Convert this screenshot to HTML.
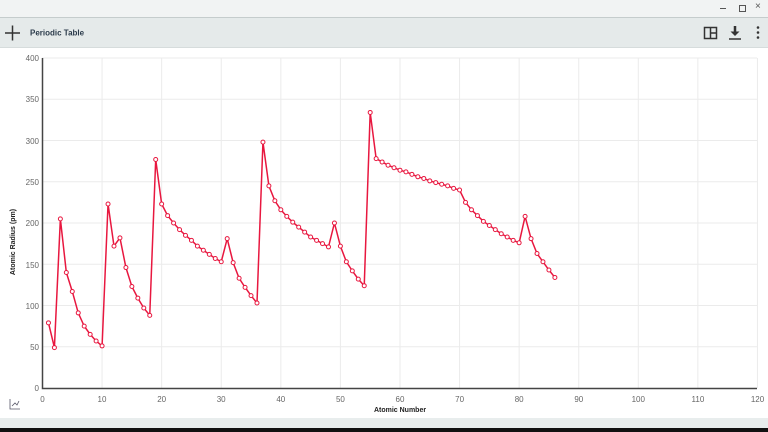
<!DOCTYPE html>
<html><head><meta charset="utf-8"><style>
body{margin:0;width:768px;height:432px;overflow:hidden;background:#fff;font-family:"Liberation Sans",sans-serif;position:relative}
#tb{position:absolute;left:0;top:0;width:768px;height:17px;background:#f1f3f3;border-bottom:1px solid #c5cccc}
#tool{position:absolute;left:0;top:18px;width:768px;height:29px;background:#e5eaea;border-bottom:1px solid #d6dcdc}
#bot{position:absolute;left:0;top:418px;width:768px;height:10px;background:#e8eded}
#blk{position:absolute;left:0;top:428px;width:768px;height:4px;background:#111}
</style></head><body>
<div id="tb">
<div style="position:absolute;left:720px;top:8px;width:6px;height:1px;background:#555"></div>
<div style="position:absolute;left:739px;top:5px;width:5px;height:5px;border:1px solid #555"></div>
<div style="position:absolute;left:755px;top:1px;font-size:10px;color:#555">×</div>
</div>
<div id="tool">
<svg width="768" height="29" style="position:absolute;left:0;top:0">
<path d="M5 15H20M12.5 7.5V22.5" stroke="#333" stroke-width="1.5"/>
<text x="30" y="17.5" font-size="8" font-weight="bold" fill="#2a3a4a" font-family="Liberation Sans">Periodic Table</text>
<rect x="704.5" y="9.5" width="12" height="11" fill="none" stroke="#333" stroke-width="1.5"/>
<path d="M710.5 9.5V20.5M710.5 15H716.5" stroke="#333" stroke-width="1.5"/>
<path d="M735 8V15" stroke="#333" stroke-width="2.5"/><path d="M730.5 13.5L735 18L739.5 13.5Z" fill="#333"/><path d="M729 21H741" stroke="#333" stroke-width="1.5"/>
<circle cx="758" cy="9.5" r="1.3" fill="#333"/><circle cx="758" cy="14.5" r="1.3" fill="#333"/><circle cx="758" cy="19.5" r="1.3" fill="#333"/>
</svg></div>
<svg id="ch" width="768" height="370" style="position:absolute;left:0;top:48px" font-family="Liberation Sans">
<g id="grid" stroke="#ebebeb" stroke-width="1"></g>
<g font-size="8" fill="#666" text-anchor="end">
<text x="39" y="13">400</text><text x="39" y="54">350</text><text x="39" y="96">300</text><text x="39" y="137">250</text><text x="39" y="178">200</text><text x="39" y="220">150</text><text x="39" y="261">100</text><text x="39" y="302">50</text><text x="39" y="343">0</text>
</g>
<g font-size="8" fill="#666" text-anchor="middle">
<text x="42.5" y="354">0</text><text x="102" y="354">10</text><text x="161.7" y="354">20</text><text x="221.2" y="354">30</text><text x="280.8" y="354">40</text><text x="340.4" y="354">50</text><text x="400" y="354">60</text><text x="459.6" y="354">70</text><text x="519.2" y="354">80</text><text x="578.8" y="354">90</text><text x="638.3" y="354">100</text><text x="697.9" y="354">110</text><text x="757.5" y="354">120</text>
</g>
<text x="400" y="364" font-size="7" font-weight="bold" fill="#222" text-anchor="middle">Atomic Number</text>
<text transform="translate(15,194) rotate(-90)" font-size="7" font-weight="bold" fill="#222" text-anchor="middle">Atomic Radius (pm)</text>
<path d="M42.5 10V340.5H757" fill="none" stroke="#444" stroke-width="1.5"/>
<path d="M10 351V361H20M12 358L15 355L17 357L19 353" fill="none" stroke="#556" stroke-width="0.8"/>
<g id="data"></g>
</svg>
<div id="bot"><div style="position:absolute;left:34px;top:10px;width:18px;height:2px;background:#ccc"></div><div style="position:absolute;left:64px;top:10px;width:18px;height:2px;background:#777"></div></div>
<div id="blk"></div>
<script>
var v=[79,49,205,140,117,91,75,65,57,51,223,172,182,146,123,109,97,88,277,223,209,200,192,185,179,172,167,162,157,153,181,152,133,122,112,103,298,245,227,216,208,201,195,189,183,179,175,171,200,172,153,142,132,124,334,278,274,270,267,264,262,259,256,254,251,249,247,245,242,240,225,216,209,202,197,192,187,183,179,176,208,181,163,153,143,134];
var ns="http://www.w3.org/2000/svg",g=document.getElementById('grid'),d=document.getElementById('data');
function X(n){return 42.5+n*5.958}function Y(y){return 340-y*0.825}
var s='';
for(var i=1;i<=12;i++)s+='<line x1="'+X(i*10)+'" y1="10" x2="'+X(i*10)+'" y2="340"/>';
for(var j=1;j<=8;j++)s+='<line x1="42" y1="'+Y(j*50)+'" x2="757" y2="'+Y(j*50)+'"/>';
g.innerHTML=s;
var p=v.map(function(a,i){return X(i+1)+','+Y(a)}).join(' ');
var h='<polyline points="'+p+'" fill="none" stroke="#e8173f" stroke-width="1.5"/>';
v.forEach(function(a,i){h+='<circle cx="'+X(i+1)+'" cy="'+Y(a)+'" r="2" fill="#fff" stroke="#e8173f" stroke-width="1"/>'});
d.innerHTML=h;
</script>
</body></html>
